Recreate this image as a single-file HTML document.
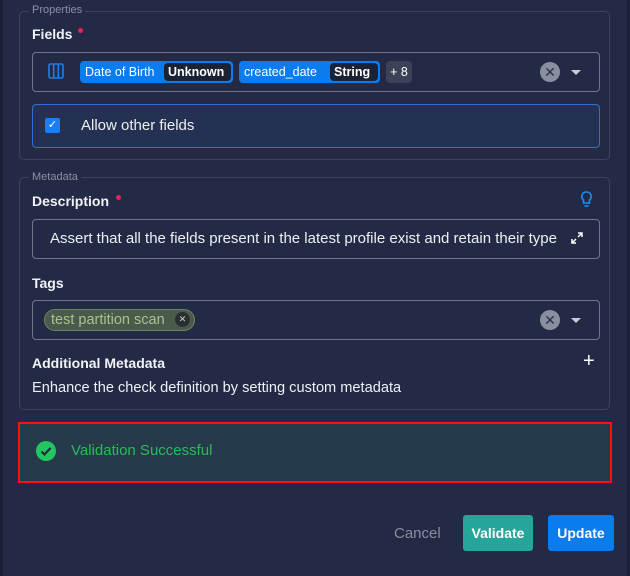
<!DOCTYPE html>
<html><head><style>
*{box-sizing:border-box;margin:0;padding:0}
body{width:630px;height:576px;background:#222a45;font-family:"Liberation Sans",sans-serif;color:#fff;position:relative;overflow:hidden}
.a{position:absolute;white-space:nowrap}
.fs{position:absolute;border:1px solid #3b4360;border-radius:5px}
.lg{position:absolute;font-size:11px;color:#8a90a3;background:#222a45;padding:0 3px}
.lbl{position:absolute;font-size:14px;font-weight:bold;color:#f2f3f6}
.dot{position:absolute;width:5px;height:5px;border-radius:50%;background:#e8215a}
.inp{position:absolute;border:1px solid #70768a;border-radius:4px}
.chip{position:absolute;height:22px;background:#0a7cf0;border-radius:4px;font-size:12.5px;line-height:22px;padding-left:5px;color:#fff;white-space:nowrap}
.in{position:absolute;top:2px;height:18px;line-height:18px;background:#1c2236;border-radius:4px;padding:0 4px;font-weight:bold;font-size:12.5px}
.clr{position:absolute;width:20px;height:20px;border-radius:50%;background:#8a8f9f;color:#2a3048;font-size:14px;text-align:center;line-height:20px}
.car{position:absolute;width:0;height:0;border-left:5px solid transparent;border-right:5px solid transparent;border-top:5px solid #c9ccd6}
</style></head><body>
<div class="a" style="left:0;top:0;width:3px;height:576px;background:#1a2036"></div>
<div class="a" style="left:627px;top:0;width:3px;height:576px;background:#1a2036"></div>

<div class="fs" style="left:19px;top:11px;width:591px;height:149px"></div>
<div class="lg" style="left:29px;top:4px">Properties</div>
<div class="lbl" style="left:32px;top:26px">Fields</div>
<div class="dot" style="left:78px;top:28px"></div>
<div class="inp" style="left:32px;top:52px;width:568px;height:40px"></div>
<svg class="a" style="left:47px;top:62px" width="18" height="18" viewBox="0 0 18 18"><rect x="2" y="2" width="14" height="14" rx="1.5" fill="none" stroke="#1c7ef0" stroke-width="1.6"/><line x1="6.7" y1="2" x2="6.7" y2="16" stroke="#1c7ef0" stroke-width="1.6"/><line x1="11.3" y1="2" x2="11.3" y2="16" stroke="#1c7ef0" stroke-width="1.6"/></svg>
<div class="chip" style="left:80px;top:61px;width:153px">Date of Birth<span class="in" style="left:84px;width:67px">Unknown</span></div>
<div class="chip" style="left:239px;top:61px;width:141px">created_date<span class="in" style="left:91px;width:48px">String</span></div>
<div class="a" style="left:386px;top:61px;width:26px;height:22px;background:#3a4257;border-radius:4px;font-size:12.5px;line-height:22px;text-align:center">+ 8</div>
<div class="clr" style="left:540px;top:62px">✕</div>
<div class="car" style="left:571px;top:70px"></div>

<div class="a" style="left:32px;top:104px;width:568px;height:44px;border:1px solid #2f6fd6;border-radius:4px;background:#243152"></div>
<div class="a" style="left:45px;top:118px;width:15px;height:15px;background:#1a7ef2;border-radius:2px;color:#fff;font-size:11px;text-align:center;line-height:15px">✓</div>
<div class="a" style="left:81px;top:117px;font-size:15px;color:#eef0f4">Allow other fields</div>

<div class="fs" style="left:19px;top:177px;width:591px;height:233px"></div>
<div class="lg" style="left:29px;top:171px">Metadata</div>
<div class="lbl" style="left:32px;top:193px">Description</div>
<div class="dot" style="left:116px;top:195px"></div>
<svg class="a" style="left:580px;top:190px" width="13" height="18" viewBox="0 0 13 18"><path d="M6.5 2a4.5 4.5 0 0 0-3 8v3h6v-3a4.5 4.5 0 0 0-3-8z" fill="none" stroke="#1c8ef0" stroke-width="1.6"/><line x1="4.5" y1="16" x2="8.5" y2="16" stroke="#1c8ef0" stroke-width="1.6"/></svg>
<div class="inp" style="left:32px;top:219px;width:568px;height:40px"></div>
<div class="a" style="left:50px;top:230px;font-size:15px;color:#eef0f4">Assert that all the fields present in the latest profile exist and retain their type</div>
<svg class="a" style="left:571px;top:232px" width="12" height="12" viewBox="0 0 12 12"><path d="M7 1h4v4M11 1l-4 4M5 11H1V7M1 11l4-4" fill="none" stroke="#fff" stroke-width="1.5"/></svg>
<div class="lbl" style="left:32px;top:275px">Tags</div>
<div class="inp" style="left:32px;top:300px;width:568px;height:40px"></div>
<div class="a" style="left:44px;top:309px;width:151px;height:22px;background:#4a5a4c;border:1px solid #6f8262;border-radius:11px;font-size:14.5px;color:#a8c48d;line-height:20px;padding-left:6px">test partition scan</div>
<div class="a" style="left:175px;top:312px;width:15px;height:15px;border-radius:50%;background:#2a3030;color:#ccc;font-size:9px;text-align:center;line-height:15px">✕</div>
<div class="clr" style="left:540px;top:310px">✕</div>
<div class="car" style="left:571px;top:318px"></div>
<div class="lbl" style="left:32px;top:355px">Additional Metadata</div>
<div class="a" style="left:583px;top:350px;font-size:20px;color:#fff">+</div>
<div class="a" style="left:32px;top:380px;font-size:14.6px;color:#eef0f4">Enhance the check definition by setting custom metadata</div>

<div class="a" style="left:18px;top:422px;width:594px;height:61px;border:2px solid #ff1010;background:#253a4a"></div>
<svg class="a" style="left:36px;top:441px" width="20" height="20" viewBox="0 0 20 20"><circle cx="10" cy="10" r="10" fill="#22c55e"/><path d="M5.5 10.5l3 3 6-6.5" fill="none" stroke="#1e2e3a" stroke-width="2.2"/></svg>
<div class="a" style="left:71px;top:442px;font-size:15px;color:#2bbb55">Validation Successful</div>

<div class="a" style="left:394px;top:525px;font-size:15px;color:#8a8f9d">Cancel</div>
<div class="a" style="left:463px;top:515px;width:70px;height:36px;background:#26a69a;border-radius:3px;font-size:14px;font-weight:bold;line-height:36px;text-align:center">Validate</div>
<div class="a" style="left:548px;top:515px;width:66px;height:36px;background:#0a7cf0;border-radius:3px;font-size:14px;font-weight:bold;line-height:36px;text-align:center">Update</div>
</body></html>
